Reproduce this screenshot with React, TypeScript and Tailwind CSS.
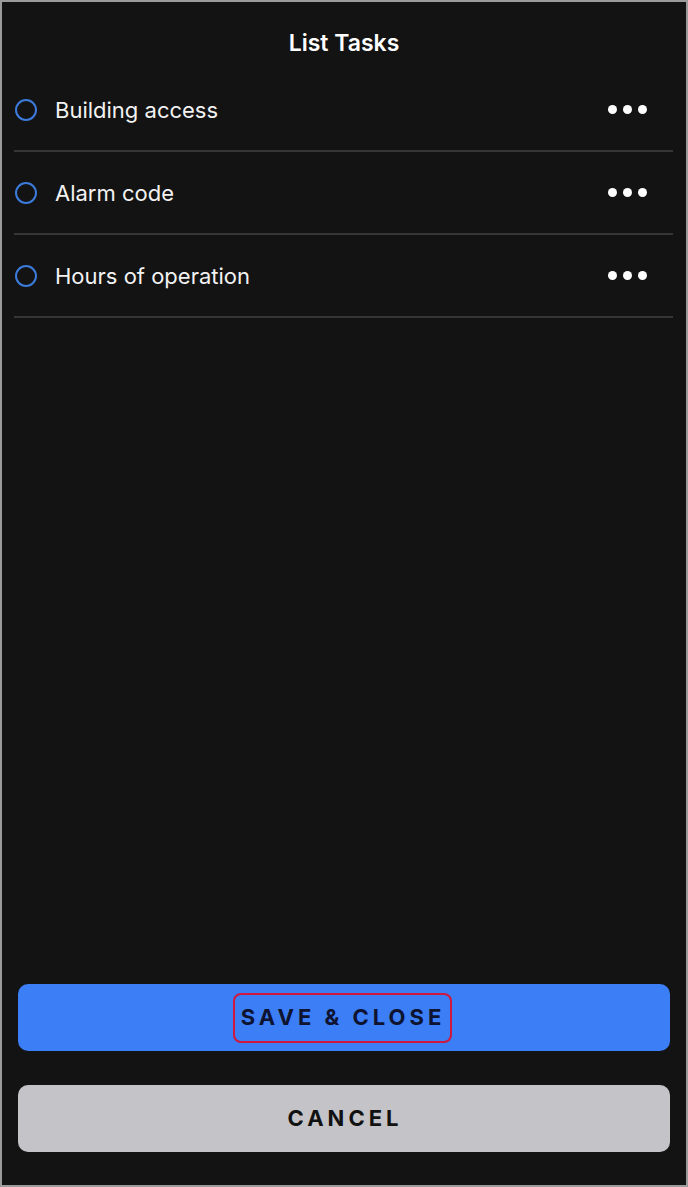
import React from 'react';

const tasks = ['Building access', 'Alarm code', 'Hours of operation'];

const MoreDots = () => (
	<div className="flex items-center gap-[6px]">
		<span className="h-[9px] w-[9px] rounded-full bg-white" />
		<span className="h-[9px] w-[9px] rounded-full bg-white" />
		<span className="h-[9px] w-[9px] rounded-full bg-white" />
	</div>
);

const App = () => {
	return (
		<div
			className="flex h-[1187px] w-[688px] flex-col border-2 border-[#9b9b9b] bg-[#131313] text-white"
			style={{ fontFamily: 'Inter, "Noto Sans", sans-serif' }}
		>
			<h1 className="pt-[27px] text-center text-[23px] font-semibold leading-[28px]">List Tasks</h1>

			<ul className="mt-[12px] flex flex-col pl-[12px] pr-[13px]">
				{tasks.map((task) => (
					<li key={task} className="flex flex-col">
						<div className="flex h-[81px] items-center pl-[1px] pr-[26px]">
							<span className="h-[22px] w-[22px] rounded-full border-2 border-[#3c7bdc]" />
							<span className="ml-[18px] flex-1 text-[22px] leading-none text-[#f2f2f2]">{task}</span>
							<MoreDots />
						</div>
						<div className="h-[2px] bg-[#363636]" />
					</li>
				))}
			</ul>

			<div className="mt-auto flex flex-col gap-[34px] px-[16px] pb-[33px]">
				<button
					type="button"
					className="flex h-[67px] items-center justify-center rounded-[10px] bg-[#3b7ef6]"
				>
					<span className="mr-[4px] flex h-[50px] w-[219px] items-center justify-center rounded-[8px] border-2 border-[#d0173c] pl-[2px] text-[22px] font-bold tracking-[4px] text-[#0e1330]">
						SAVE &amp; CLOSE
					</span>
				</button>
				<button
					type="button"
					className="flex h-[67px] items-center justify-center rounded-[10px] bg-[#c4c3c8] pl-[2px] text-[22px] font-bold tracking-[4px] text-[#111]"
				>
					CANCEL
				</button>
			</div>
		</div>
	);
};

export default App;
